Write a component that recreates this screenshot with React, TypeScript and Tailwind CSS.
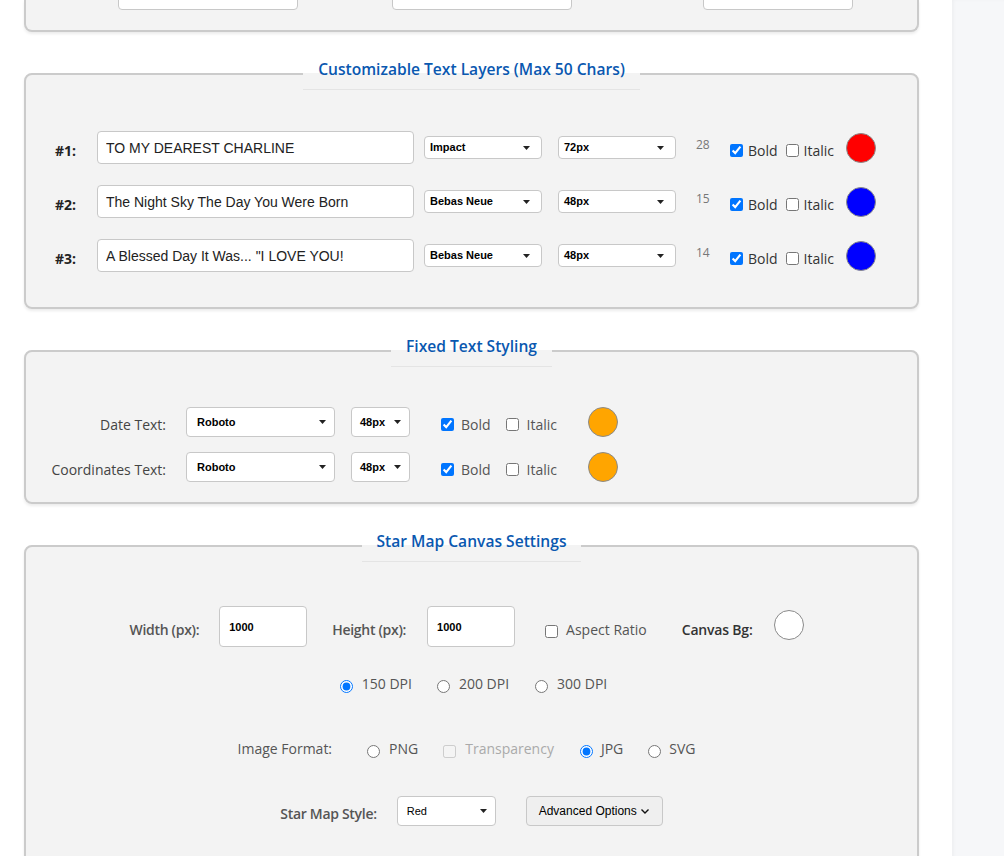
import React from "react";

function Tri() {
  return (
    <svg width="7" height="4" viewBox="0 0 7 4" className="shrink-0">
      <polygon points="0,0 7,0 3.5,4" fill="#222" />
    </svg>
  );
}

function Sel({ text, className }: { text: string; className: string }) {
  return (
    <div
      className={`flex shrink-0 items-center justify-between rounded-[4px] border border-[#c8c8c8] bg-white font-['Liberation_Sans',Arial,sans-serif] text-[11px] text-black ${className}`}
    >
      <span>{text}</span>
      <Tri />
    </div>
  );
}

function Legend({ children }: { children: React.ReactNode }) {
  return (
    <legend className="mx-auto border-b border-[#e4e4e4] px-[15px] pb-[8px] text-[15.6px] leading-[24px] font-semibold text-[#0a58b0]">
      {children}
    </legend>
  );
}

const fs =
  "rounded-[8px] border-2 border-[#cbcbcb] bg-[#f3f3f3] shadow-[0_2px_3px_rgba(0,0,0,0.08)] p-0 m-0";

function LayerRow({
  n,
  text,
  font,
  size,
  count,
  color,
  first,
}: {
  n: number;
  text: string;
  font: string;
  size: string;
  count: string;
  color: string;
  first?: boolean;
}) {
  return (
    <div className={`flex h-[33px] items-center ${first ? "mt-[41px]" : "mt-[21px]"}`}>
      <span className="ml-[29px] mt-[5px] w-[42px] shrink-0 text-[14px] font-bold text-[#222]">#{n}:</span>
      <input
        defaultValue={text}
        className="h-[33px] w-[317px] shrink-0 rounded-[4px] border border-[#c8c8c8] bg-white px-[8px] font-['Liberation_Sans',Arial,sans-serif] text-[14px] text-[#222] outline-none"
      />
      <Sel text={font} className="ml-[10px] h-[23px] w-[118px] pl-[5px] pr-[11px] font-bold" />
      <Sel text={size} className="ml-[16px] h-[23px] w-[118px] pl-[5px] pr-[11px] font-bold" />
      <span className="mb-[5px] ml-[20px] w-[14px] shrink-0 text-[12px] text-[#777]">{count}</span>
      <input type="checkbox" defaultChecked className="mt-[5px] mb-0 ml-[20px] mr-0 h-[13px] w-[13px] shrink-0" />
      <span className="ml-[5px] mt-[5px] text-[14px] text-[#333]">Bold</span>
      <input type="checkbox" className="mt-[5px] mb-0 ml-[8px] mr-0 h-[13px] w-[13px] shrink-0" />
      <span className="ml-[5px] mt-[5px] text-[14px] text-[#333]">Italic</span>
      <div className={`ml-[12px] h-[30px] w-[30px] shrink-0 rounded-full border border-[#8a8a8a] ${color}`} />
    </div>
  );
}

function FixedRow({ label, first }: { label: string; first?: boolean }) {
  return (
    <div className={`flex h-[30px] items-center ${first ? "mt-[40px]" : "mt-[15px]"}`}>
      <span className="mt-[4px] w-[140px] shrink-0 text-right text-[14px] font-medium text-[#444]">{label}</span>
      <Sel text="Roboto" className="ml-[20px] h-[30px] w-[149px] pl-[10px] pr-[8px] font-bold" />
      <Sel text="48px" className="ml-[16px] h-[30px] w-[59px] pl-[8px] pr-[8px] font-bold" />
      <input type="checkbox" defaultChecked className="mt-[4px] mb-0 ml-[31px] mr-0 h-[13px] w-[13px] shrink-0" />
      <span className="ml-[7px] mt-[4px] text-[14px] text-[#555]">Bold</span>
      <input type="checkbox" className="mt-[4px] mb-0 ml-[15px] mr-0 h-[13px] w-[13px] shrink-0" />
      <span className="ml-[8px] mt-[4px] text-[14px] text-[#555]">Italic</span>
      <div className="ml-[31px] h-[30px] w-[30px] shrink-0 rounded-full border border-[#8a8a8a] bg-[#ffa500]" />
    </div>
  );
}

export default function App() {
  return (
    <div className="flex min-h-[856px] w-full bg-white font-['Open_Sans',sans-serif]">
      <div className="w-[952px] shrink-0 pl-[24px]">
        <div className="w-[895px]">
          {/* Top (cut-off) fieldset */}
          <div className="h-[32px] overflow-hidden rounded-b-[8px] border-x-2 border-b-2 border-[#cbcbcb] bg-[#f3f3f3] shadow-[0_2px_3px_rgba(0,0,0,0.08)]">
            <div className="-mt-[24px] flex h-[34px] items-center">
              <div className="ml-[92px] h-[34px] w-[180px] rounded-[4px] border border-[#c8c8c8] bg-white" />
              <div className="ml-[94px] h-[34px] w-[180px] rounded-[4px] border border-[#c8c8c8] bg-white" />
              <div className="ml-[131px] h-[34px] w-[150px] rounded-[4px] border border-[#c8c8c8] bg-white" />
            </div>
          </div>

          {/* Customizable Text Layers */}
          <fieldset className={`${fs} mt-[25px] pb-[35px]`}>
            <Legend>Customizable Text Layers (Max 50 Chars)</Legend>
            <LayerRow first n={1} text="TO MY DEAREST CHARLINE" font="Impact" size="72px" count="28" color="bg-[#ff0000]" />
            <LayerRow n={2} text="The Night Sky The Day You Were Born" font="Bebas Neue" size="48px" count="15" color="bg-[#0000ff]" />
            <LayerRow n={3} text={'A Blessed Day It Was... "I LOVE YOU!'} font="Bebas Neue" size="48px" count="14" color="bg-[#0000ff]" />
          </fieldset>

          {/* Fixed Text Styling */}
          <fieldset className={`${fs} mt-[25px] pb-[20px]`}>
            <Legend>Fixed Text Styling</Legend>
            <FixedRow first label="Date Text:" />
            <FixedRow label="Coordinates Text:" />
          </fieldset>

          {/* Star Map Canvas Settings */}
          <fieldset className={`${fs} mt-[25px] pb-[60px]`}>
            <Legend>Star Map Canvas Settings</Legend>

            <div className="mt-[44px] flex h-[41px] items-center justify-center pr-[10px]">
              <span className="mt-[6px] text-[14px] font-semibold tracking-[-0.3px] text-[#555]">Width (px):</span>
              <input
                defaultValue="1000"
                className="ml-[20px] h-[41px] w-[88px] rounded-[4px] border border-[#c8c8c8] bg-white px-[9px] font-['Liberation_Sans',Arial,sans-serif] text-[11px] font-bold text-black outline-none"
              />
              <span className="ml-[25px] mt-[6px] text-[14px] font-semibold tracking-[-0.3px] text-[#555]">Height (px):</span>
              <input
                defaultValue="1000"
                className="ml-[21px] h-[41px] w-[88px] rounded-[4px] border border-[#c8c8c8] bg-white px-[9px] font-['Liberation_Sans',Arial,sans-serif] text-[11px] font-bold text-black outline-none"
              />
              <input type="checkbox" className="mt-[10px] mb-0 ml-[30px] mr-0 h-[13px] w-[13px] shrink-0" />
              <span className="ml-[8px] mt-[6px] text-[14px] text-[#555]">Aspect Ratio</span>
              <span className="ml-[35px] mt-[6px] text-[14px] font-semibold tracking-[-0.2px] text-[#333]">Canvas Bg:</span>
              <div className="mb-[3px] ml-[21px] h-[30px] w-[30px] shrink-0 rounded-full border border-[#8a8a8a] bg-white" />
            </div>

            <div className="mt-[27px] flex h-[20px] items-center justify-center pl-[4px]">
              <input type="radio" name="dpi" defaultChecked className="mt-[5px] mb-0 ml-0 mr-0 h-[13px] w-[13px] shrink-0" />
              <span className="mb-[2px] ml-[9px] text-[14px] text-[#555]">150 DPI</span>
              <input type="radio" name="dpi" className="mt-[5px] mb-0 ml-[25px] mr-0 h-[13px] w-[13px] shrink-0" />
              <span className="mb-[2px] ml-[9px] text-[14px] text-[#555]">200 DPI</span>
              <input type="radio" name="dpi" className="mt-[5px] mb-0 ml-[26px] mr-0 h-[13px] w-[13px] shrink-0" />
              <span className="mb-[2px] ml-[9px] text-[14px] text-[#555]">300 DPI</span>
            </div>

            <div className="mt-[44px] flex h-[20px] items-center justify-center pr-[10px]">
              <span className="text-[14px] text-[#555]">Image Format:</span>
              <input type="radio" name="fmt" className="mt-[6px] mb-0 ml-[35px] mr-0 h-[13px] w-[13px] shrink-0" />
              <span className="ml-[9px] text-[14px] text-[#555]">PNG</span>
              <input type="checkbox" disabled className="mt-[6px] mb-0 ml-[25px] mr-0 h-[13px] w-[13px] shrink-0" />
              <span className="ml-[9px] text-[14px] text-[#aaa]">Transparency</span>
              <input type="radio" name="fmt" defaultChecked className="mt-[6px] mb-0 ml-[26px] mr-0 h-[13px] w-[13px] shrink-0" />
              <span className="ml-[8px] text-[14px] text-[#555]">JPG</span>
              <input type="radio" name="fmt" className="mt-[6px] mb-0 ml-[25px] mr-0 h-[13px] w-[13px] shrink-0" />
              <span className="ml-[8px] text-[14px] text-[#555]">SVG</span>
            </div>

            <div className="mt-[38px] flex h-[30px] items-center justify-center">
              <span className="mt-[4px] text-[14px] font-semibold tracking-[-0.3px] text-[#555]">Star Map Style:</span>
              <Sel text="Red" className="ml-[20px] h-[30px] w-[99px] pl-[9px] pr-[8px]" />
              <button className="ml-[30px] flex h-[30px] w-[137px] shrink-0 items-center justify-center gap-[3px] rounded-[4px] border border-[#c8c8c8] bg-[#efefef] font-['Liberation_Sans',Arial,sans-serif] text-[12px] text-black">
                <span>Advanced Options</span>
                <svg width="10" height="10" viewBox="0 0 10 10">
                  <path d="M1.5 3.5 L5 7 L8.5 3.5" fill="none" stroke="#111" strokeWidth="1.4" />
                </svg>
              </button>
            </div>
          </fieldset>
        </div>
      </div>
      <div className="flex-1 bg-[#f6f7f9] shadow-[inset_2px_0_3px_rgba(0,0,0,0.03)]" />
    </div>
  );
}
